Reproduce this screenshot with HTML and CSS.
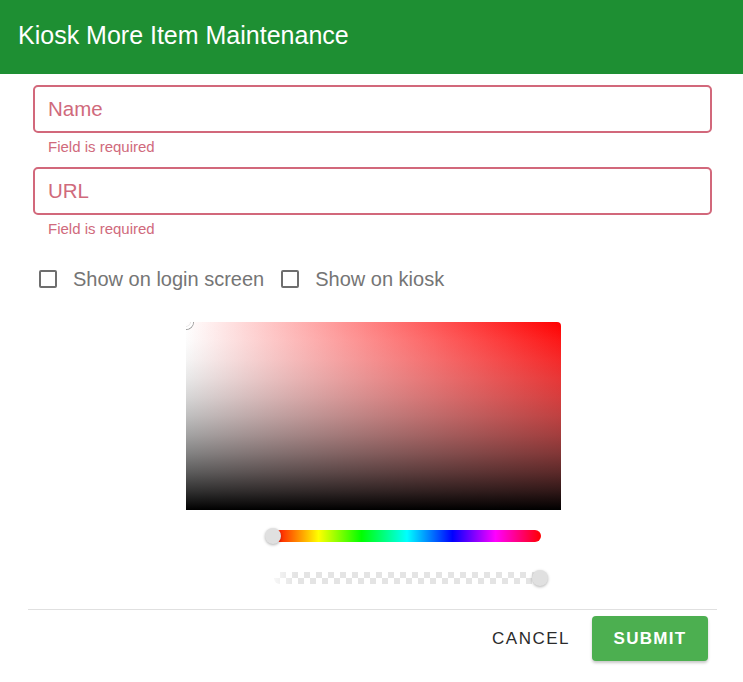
FILE: index.html
```html
<!DOCTYPE html>
<html>
<head>
<meta charset="utf-8">
<link rel="stylesheet" href="styles.css">
</head>
<body>
<div class="dialog">
  <header class="title-bar">Kiosk More Item Maintenance</header>
  <main class="content">
    <div class="field">
      <div class="input-box"><span class="placeholder">Name</span></div>
      <div class="helper">Field is required</div>
    </div>
    <div class="field">
      <div class="input-box"><span class="placeholder">URL</span></div>
      <div class="helper">Field is required</div>
    </div>
    <div class="checks">
      <label class="check"><span class="box"></span><span class="check-label">Show on login screen</span></label>
      <label class="check"><span class="box"></span><span class="check-label">Show on kiosk</span></label>
    </div>
    <div class="picker">
      <div class="saturation"><span class="sat-pointer"></span></div>
      <div class="hue"><span class="thumb thumb-left"></span></div>
      <div class="alpha"><span class="thumb thumb-right"></span></div>
    </div>
  </main>
  <footer class="actions">
    <button class="btn btn-text">CANCEL</button>
    <button class="btn btn-primary">SUBMIT</button>
  </footer>
</div>
</body>
</html>
```

FILE: styles.css
```css
html, body {
  margin: 0;
  padding: 0;
  background: #ffffff;
}
body {
  font-family: "Liberation Sans", Arial, sans-serif;
  width: 743px;
  height: 682px;
  overflow: hidden;
}
.dialog {
  display: flex;
  flex-direction: column;
}
.title-bar {
  height: 74px;
  box-sizing: border-box;
  background: #1e8f33;
  color: #ffffff;
  font-size: 25px;
  padding-left: 18px;
  display: flex;
  align-items: center;
  padding-bottom: 4px;
}
.content {
  padding: 11px 31px 0 33px;
  display: flex;
  flex-direction: column;
}
.field {
  display: flex;
  flex-direction: column;
  margin-bottom: 12px;
}
.input-box {
  height: 48px;
  box-sizing: border-box;
  border: 2px solid #d2687b;
  border-radius: 5px;
  display: flex;
  align-items: center;
  padding-left: 13px;
  padding-bottom: 1px;
}
.placeholder {
  color: #d06a7c;
  font-size: 20.5px;
}
.helper {
  color: #d06a7c;
  font-size: 15px;
  line-height: 16px;
  padding-left: 15px;
  margin-top: 6px;
}
.checks {
  display: flex;
  align-items: center;
  gap: 17px;
  margin-top: 15px;
  padding-left: 6px;
  height: 30px;
}
.check {
  display: flex;
  align-items: center;
  gap: 16px;
}
.box {
  width: 18px;
  height: 18px;
  box-sizing: border-box;
  border: 2px solid #6e6e6e;
  border-radius: 2px;
}
.check-label {
  color: #757575;
  font-size: 20px;
}
.picker {
  display: flex;
  flex-direction: column;
  align-items: flex-start;
  margin-top: 28px;
  padding-left: 153px;
}
.saturation {
  position: relative;
  width: 375px;
  height: 188px;
  border-radius: 4px 4px 0 0;
  overflow: hidden;
  background:
    linear-gradient(to bottom,
      rgba(255,255,255,0) 0%,
      rgba(230,230,230,0.1) 10%,
      rgba(204,204,204,0.2) 20%,
      rgba(179,179,179,0.3) 30%,
      rgba(153,153,153,0.4) 40%,
      rgba(128,128,128,0.5) 50%,
      rgba(102,102,102,0.6) 60%,
      rgba(77,77,77,0.7) 70%,
      rgba(51,51,51,0.8) 80%,
      rgba(26,26,26,0.9) 90%,
      rgba(0,0,0,1) 100%),
    linear-gradient(to right, #ffffff, #ff0000);
}
.sat-pointer {
  position: absolute;
  left: -7px;
  top: -7px;
  width: 14px;
  height: 14px;
  box-sizing: border-box;
  border-radius: 50%;
  border: 2px solid #ffffff;
  box-shadow: 0 0 0 1px #9a9a9a, inset 0 0 0 1px rgba(0,0,0,0.1);
}
.hue {
  position: relative;
  margin-top: 20px;
  margin-left: 87px;
  width: 268px;
  height: 12px;
  border-radius: 0 6px 6px 0;
  background: linear-gradient(to right, #ff0000 0%, #ffff00 17%, #00ff00 33%, #00ffff 50%, #0000ff 67%, #ff00ff 83%, #ff0000 100%);
}
.alpha {
  position: relative;
  margin-top: 30px;
  margin-left: 88px;
  width: 266px;
  height: 12px;
  border-radius: 6px;
  background-color: #ffffff;
  background-image:
    linear-gradient(to right, rgba(255,255,255,0.7), rgba(255,255,255,0) 8%),
    conic-gradient(#e4e4e4 25%, #ffffff 0 50%, #e4e4e4 0 75%, #ffffff 0);
  background-size: 100% 100%, 12px 12px;
}
.thumb {
  position: absolute;
  top: 50%;
  width: 16px;
  height: 16px;
  margin-top: -8px;
  border-radius: 50%;
  background: #e0e0e0;
  box-shadow: 0 1px 3px rgba(0,0,0,0.3);
}
.thumb-left { left: -8px; }
.thumb-right { right: -8px; }
.actions {
  margin: 25px 26px 0 28px;
  border-top: 1px solid #e0e0e0;
  display: flex;
  justify-content: flex-end;
  align-items: center;
  gap: 12px;
  padding-top: 6px;
  padding-right: 9px;
}
.btn {
  font-family: "Liberation Sans", Arial, sans-serif;
  font-size: 17px;
  letter-spacing: 1.5px;
  border: none;
  background: none;
  height: 45px;
  padding: 0 22px;
  border-radius: 4px;
  cursor: pointer;
}
.btn-text {
  color: #2b2b2b;
  padding: 0 10px;
}
.btn-primary {
  background: #4caf50;
  color: #ffffff;
  font-weight: bold;
  letter-spacing: 1.3px;
  width: 116px;
  padding: 0;
  box-shadow: 0 2px 3px rgba(0,0,0,0.22);
}
```
